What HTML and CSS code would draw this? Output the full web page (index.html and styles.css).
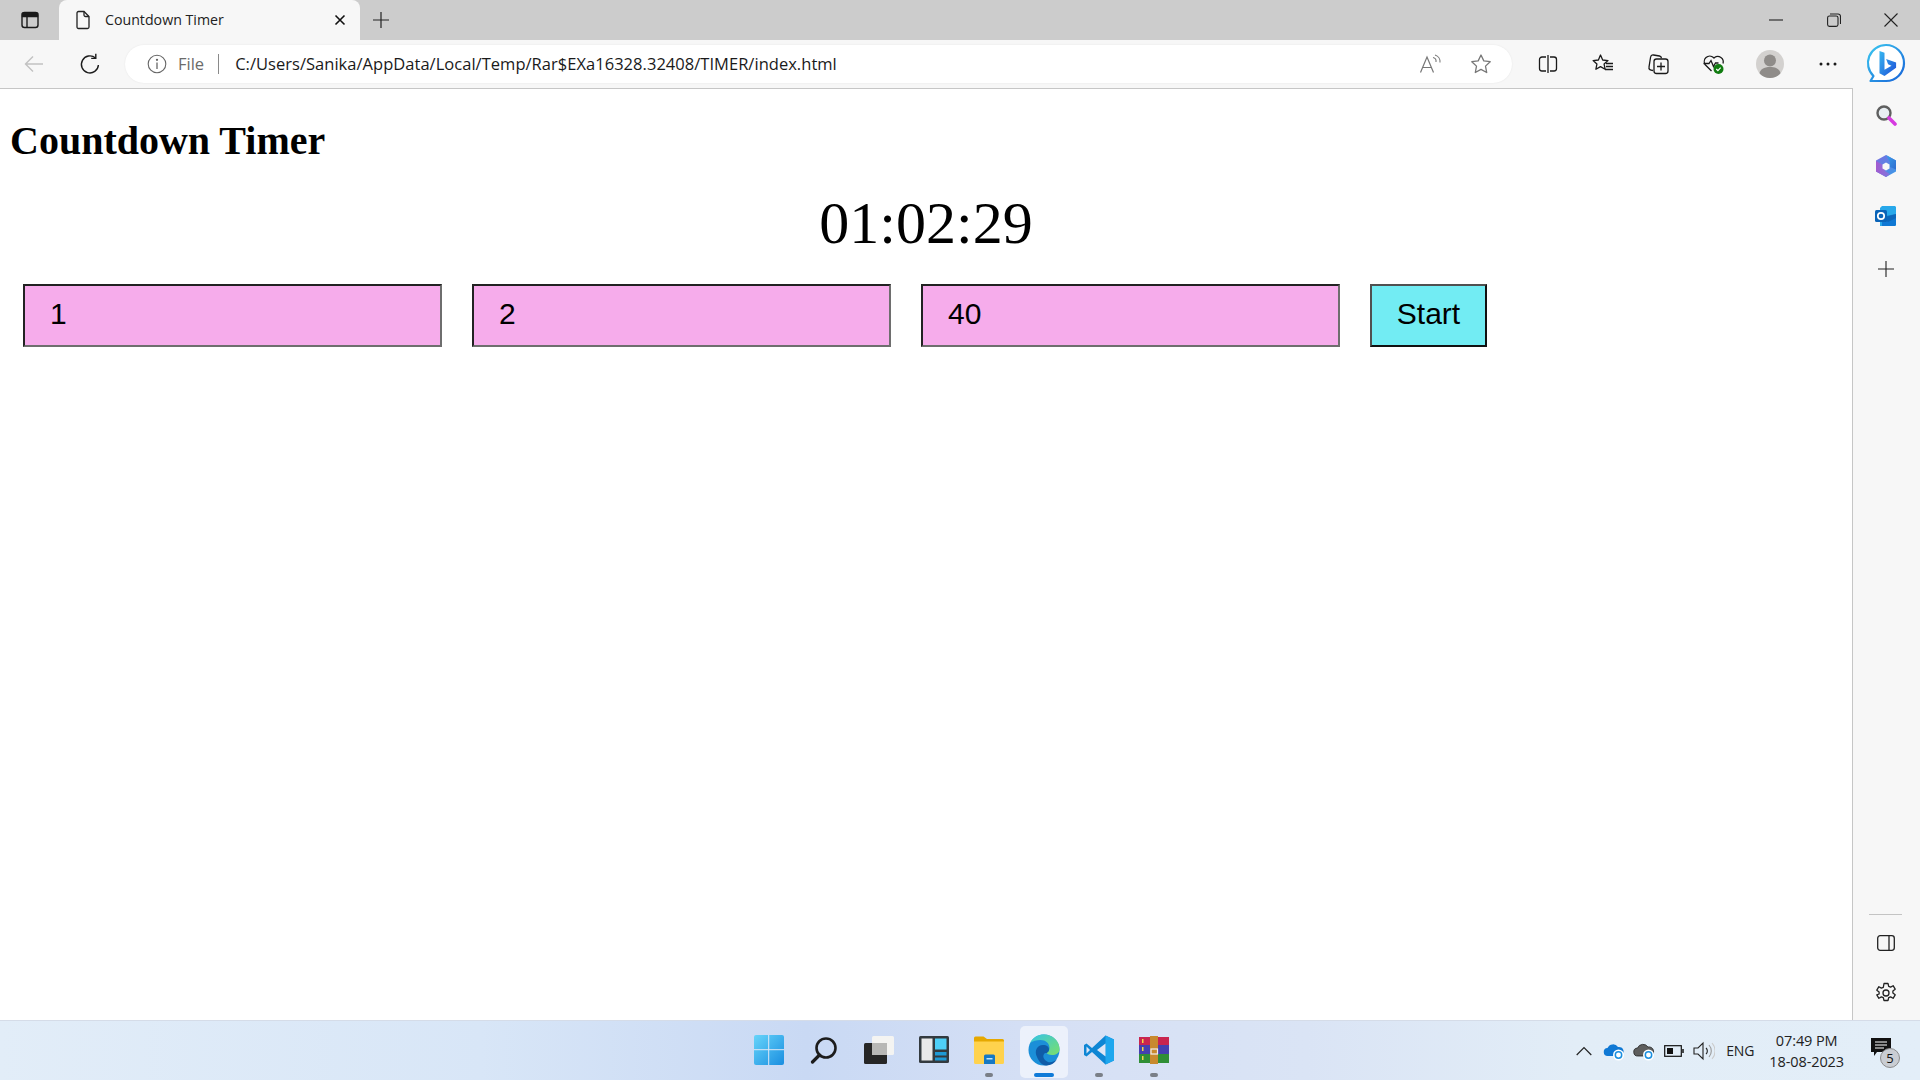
FILE: index.html
```html
<!DOCTYPE html>
<html lang="en">
<head>
<meta charset="utf-8">
<title>Countdown Timer</title>
<link rel="stylesheet" href="styles.css">
</head>
<body>
<div class="window">
  <header class="tabstrip">
    <div class="tabstrip-left">
      <span class="cell-tabs">
        <svg width="20" height="20" viewBox="0 0 20 20" fill="none" stroke="#1a1a1a" stroke-width="1.4"><rect x="2" y="2.5" width="16" height="15" rx="2.5"/><path d="M2.5 3.5h15v3h-15z" fill="#1a1a1a"/><path d="M7 6v11"/></svg>
      </span>
      <div class="tab">
        <svg width="18" height="20" viewBox="0 0 18 20" fill="none" stroke="#222" stroke-width="1.3"><path d="M3 3a1.5 1.5 0 0 1 1.5-1.5H10L15 6.5V17a1.5 1.5 0 0 1-1.5 1.5h-9A1.5 1.5 0 0 1 3 17z"/><path d="M10 1.5V5a1.5 1.5 0 0 0 1.5 1.5H15"/></svg>
        <span class="tab-title">Countdown Timer</span>
        <svg class="tab-close" width="12" height="12" viewBox="0 0 12 12" stroke="#111" stroke-width="1.6"><path d="M1.5 1.5l9 9M10.500 1.500l-9 9"/></svg>
      </div>
      <span class="cell-new">
        <svg width="18" height="18" viewBox="0 0 18 18" stroke="#222" stroke-width="1.2"><path d="M9 1v16M1 9h16"/></svg>
      </span>
    </div>
    <div class="winctl">
      <span class="winbtn"><svg width="14" height="14" viewBox="0 0 14 14" stroke="#222" stroke-width="1.1"><path d="M0 7h14"/></svg></span>
      <span class="winbtn"><svg width="14" height="14" viewBox="0 0 14 14" fill="none" stroke="#222" stroke-width="1.1"><rect x=".6" y="3" width="10.400" height="10.400" rx="1.800"/><path d="M3 1h8a2.500 2.500 0 0 1 2.500 2.500V11"/></svg></span>
      <span class="winbtn"><svg width="14" height="14" viewBox="0 0 14 14" stroke="#222" stroke-width="1.1"><path d="M.5.5l13 13M13.500.5l-13 13"/></svg></span>
    </div>
  </header>

  <nav class="toolbar">
    <span class="navbtn"><svg width="20" height="18" viewBox="0 0 20 18" fill="none" stroke="#c2c2c2" stroke-width="1.4"><path d="M19 9H1.500M9 1.500L1.500 9 9 16.500"/></svg></span>
    <span class="navbtn"><svg width="22" height="22" viewBox="0 0 22 22" fill="none" stroke="#1c1c1c" stroke-width="1.4"><path d="M16.500 5A8.500 8.500 0 1 0 19.400 12"/><path d="M16.800 .8V5.400H12.200"/></svg></span>
    <div class="address">
      <svg class="addr-info" width="20" height="20" viewBox="0 0 20 20" fill="none" stroke="#666" stroke-width="1.100"><circle cx="10" cy="10" r="8.800"/><path d="M10 8.500V15" stroke-width="1.300"/><circle cx="10" cy="5.800" r=".6" fill="#666"/></svg>
      <span class="addr-file">File</span>
      <span class="addr-sep"></span>
      <span class="addr-url">C:/Users/Sanika/AppData/Local/Temp/Rar$EXa16328.32408/TIMER/index.html</span>
      <span class="addr-actions">
        <svg width="24" height="20" viewBox="0 0 24 20" fill="none" stroke="#777" stroke-width="1.200"><path d="M1.500 18.500L8 3l6.500 15.500M3.800 13.500h8.400"/><path d="M14 3.500a4 4 0 0 1 3 4.500M16 1a7 7 0 0 1 5 7.500" stroke-width="1.100"/></svg>
        <svg width="22" height="22" viewBox="0 0 22 22" fill="none" stroke="#777" stroke-width="1.300" stroke-linejoin="round"><path d="M11 2l2.800 5.900 6.400.8-4.700 4.400 1.200 6.400L11 16.400l-5.700 3.100 1.200-6.400L1.800 8.700l6.400-.8z"/></svg>
      </span>
    </div>
    <div class="toolbar-right">
      <span class="tbtn"><svg width="20" height="20" viewBox="0 0 20 20" fill="none" stroke="#1a1a1a" stroke-width="1.300"><path d="M8 3H4a2.500 2.500 0 0 0-2.500 2.500v9A2.500 2.500 0 0 0 4 17h4M12 3h4a2.500 2.500 0 0 1 2.500 2.500v9A2.500 2.500 0 0 1 16 17h-4M10 1v18"/></svg></span>
      <span class="tbtn"><svg width="22" height="22" viewBox="0 0 22 22" fill="none" stroke="#1a1a1a" stroke-width="1.300" stroke-linejoin="round"><path d="M8.500 2l2.200 5 5.300.6-3.900 3.500 1 5.100-4.600-2.600-4.600 2.600 1-5.100L1.100 7.600 6.400 7z"/><path d="M14 10.500h7M14 13.500h7M13 16.500h8"/></svg></span>
      <span class="tbtn"><svg width="22" height="22" viewBox="0 0 22 22" fill="none" stroke="#1a1a1a" stroke-width="1.300"><path d="M6 17.500l-2-.4A2.500 2.500 0 0 1 2 14.200L3.600 4a2.500 2.500 0 0 1 2.900-2l6 1a2.500 2.500 0 0 1 2 2.200"/><rect x="7" y="6" width="14" height="14.500" rx="2.500"/><path d="M14 9.500v8M10 13.500h8"/></svg></span>
      <span class="tbtn"><svg width="24" height="24" viewBox="0 0 24 24" fill="none" stroke="#1a1a1a" stroke-width="1.300"><path d="M9.500 19L3.500 13A5.500 5.500 0 0 1 11.500 5.500l.5.5.5-.5A5.500 5.500 0 0 1 21 11.500"/><path d="M1.500 11.500H7l2-3 2.500 6 2-3.500h3"/><circle cx="16.500" cy="17" r="5" fill="#107c10" stroke="none"/><path d="M14.300 17l1.600 1.600 2.800-3" stroke="#fff" stroke-width="1.200"/></svg></span>
      <span class="tbtn tbtn-avatar"><span class="avatar"><svg width="28" height="28" viewBox="0 0 28 28" fill="#8f8c89"><circle cx="14" cy="10.500" r="6"/><path d="M3 25c1-6 5-8 11-8s10 2 11 8a14 14 0 0 1-22 0z"/></svg></span></span>
      <span class="tbtn tbtn-more"><svg width="18" height="4" viewBox="0 0 18 4" fill="#1a1a1a"><circle cx="2" cy="2" r="1.500"/><circle cx="9" cy="2" r="1.500"/><circle cx="16" cy="2" r="1.500"/></svg></span>
      <span class="tbtn-bing"><svg width="40" height="42" viewBox="0 0 40 42"><defs><linearGradient id="bingRing" x1="0" y1="0" x2="1" y2="1"><stop offset="0" stop-color="#3bc8f0"/><stop offset="1" stop-color="#1763d8"/></linearGradient><linearGradient id="bingB" x1="0" y1="0" x2="1" y2="1"><stop offset="0" stop-color="#36b7f0"/><stop offset="1" stop-color="#1d4fd8"/></linearGradient></defs><path d="M20 2a18 18 0 0 1 0 36H4.500l3-5A18 18 0 0 1 20 2z" fill="#fff" stroke="url(#bingRing)" stroke-width="2.200" stroke-linejoin="round"/><path d="M13.500 8l5 1.800v17l7-4-3.400-1.600-2-5.200 10 3.500v5.200L18.500 33l-5-2.800z" fill="url(#bingB)"/></svg></span>
    </div>
  </nav>

  <div class="body-row">
    <main class="page">
      <h1 class="title">Countdown Timer</h1>
      <div class="clock">01:02:29</div>
      <form class="controls">
        <input class="field" type="text" value="1">
        <input class="field" type="text" value="2">
        <input class="field" type="text" value="40">
        <button class="start" type="button">Start</button>
      </form>
    </main>
    <aside class="sidebar">
      <div class="side-top">
        <span class="sidebtn"><svg width="22" height="22" viewBox="0 0 22 22" fill="none"><circle cx="9" cy="9" r="6.500" fill="#e8eef2" stroke="#5f5f5f" stroke-width="2.400"/><path d="M14 14l6 6" stroke="#d63be0" stroke-width="3.600" stroke-linecap="round"/></svg></span>
        <span class="sidebtn"><svg width="22" height="24" viewBox="0 0 22 24"><defs><linearGradient id="m1" x1="0" y1="0" x2="1" y2="1"><stop offset="0" stop-color="#7a6de0"/><stop offset="1" stop-color="#3a9be8"/></linearGradient><linearGradient id="m2" x1="0" y1="0" x2="1" y2="1"><stop offset="0" stop-color="#3aa2ee"/><stop offset="1" stop-color="#2f6ccf"/></linearGradient><linearGradient id="m3" x1="0" y1="0" x2="1" y2="0"><stop offset="0" stop-color="#a35bcf"/><stop offset="1" stop-color="#7e78dd"/></linearGradient></defs><path d="M11 1L21 6.500v11L11 23 1 17.500v-11z" fill="url(#m1)"/><path d="M11 1l10 5.500v9L15 13V8z" fill="url(#m2)"/><path d="M1 7l9 5v5l5 3-4 3-10-5.500z" fill="url(#m3)"/><path d="M11 8.500l3.500 2v4L11 16.500l-3.500-2v-4z" fill="#f7f7f7"/></svg></span>
        <span class="sidebtn"><svg width="22" height="22" viewBox="0 0 22 22"><path d="M7 1h13l1 1v18l-1 1H5V3z" fill="#28a8ea"/><path d="M21 9v11l-1 1H7V13z" fill="#0f78d4"/><path d="M6 12l15-3v4l-8 4z" fill="#0a5aa8" opacity=".6"/><rect x="0" y="5" width="12" height="12" rx="1.500" fill="#0a64b8"/><circle cx="6" cy="11" r="3.200" fill="none" stroke="#fff" stroke-width="1.700"/></svg></span>
        <span class="sidebtn"><svg width="16" height="16" viewBox="0 0 16 16" stroke="#222" stroke-width="1.100"><path d="M8 0v16M0 8h16"/></svg></span>
      </div>
      <div class="side-bottom">
        <span class="side-divider"></span>
        <span class="sidebtn sidebtn-panel"><svg width="20" height="18" viewBox="0 0 20 18" fill="none" stroke="#222" stroke-width="1.300"><rect x="1.700" y="1.700" width="16.600" height="14.600" rx="2.500"/><path d="M13 1.700v14.600"/></svg></span>
        <span class="sidebtn"><svg width="22" height="22" viewBox="0 0 22 22" fill="none" stroke="#222" stroke-width="1.300" stroke-linejoin="round"><circle cx="11" cy="11" r="3"/><path d="M9 1.500h4l.7 2.800 1.900.8 2.500-1.400 2.100 3.500-2.300 1.800v2l2.300 1.800-2.100 3.500-2.500-1.400-1.900.8-.7 2.800H9l-.7-2.800-1.900-.8-2.500 1.400-2.100-3.500L4.100 12v-2L1.800 8.200l2.100-3.500 2.500 1.400 1.900-.8z"/></svg></span>
      </div>
    </aside>
  </div>

  <footer class="taskbar">
    <div class="task-spacer"></div>
    <div class="task-apps">
      <span class="app"><svg width="30" height="30" viewBox="0 0 30 30"><defs><linearGradient id="w1" x1="0" y1="0" x2="1" y2="1"><stop offset="0" stop-color="#66d4fa"/><stop offset="1" stop-color="#1a8ee0"/></linearGradient></defs><rect width="30" height="30" rx="2" fill="url(#w1)"/><path d="M14.700 0v30M0 14.700h30" stroke="#dfe8f6" stroke-width="1"/></svg></span>
      <span class="app"><svg width="28" height="28" viewBox="0 0 28 28" fill="none" stroke="#1c1c1c" stroke-width="2.600"><circle cx="16" cy="12" r="9.500"/><path d="M9.500 19L2.500 26" stroke-width="3.200" stroke-linecap="round"/></svg></span>
      <span class="app"><svg width="30" height="30" viewBox="0 0 30 30"><rect x="8" y="1" width="22" height="19" rx="1.500" fill="#f4f4f2"/><rect x="0" y="8" width="23" height="21" rx="1.500" fill="#262626"/><rect x="8" y="8" width="15" height="12" fill="#b8b8b6"/></svg></span>
      <span class="app"><svg width="30" height="27" viewBox="0 0 30 27"><rect width="30" height="27" rx="1.500" fill="#333a3f"/><rect x="2.500" y="2.500" width="11" height="22" fill="#e9e9e9"/><rect x="16" y="2.500" width="11.500" height="11" fill="#4fd0f7"/><rect x="16" y="16" width="11.500" height="3.500" fill="#1e9ad6"/><rect x="16" y="21.500" width="11.500" height="3" fill="#1e9ad6"/></svg></span>
      <span class="app"><svg width="30" height="28" viewBox="0 0 30 28"><path d="M0 2a1.500 1.500 0 0 1 1.500-1.500h8L13 3h15.500A1.500 1.500 0 0 1 30 4.500V8H0z" fill="#e6a800"/><path d="M0 5.500h30V26.500a1.500 1.500 0 0 1-1.500 1.500h-27A1.500 1.500 0 0 1 0 26.500z" fill="#ffd24d"/><path d="M10 20a1.500 1.500 0 0 1 1.500-1.500h8A1.500 1.500 0 0 1 21 20v8H10z" fill="#1578c4"/><rect x="12.500" y="22" width="6" height="1.500" fill="#bfe3f8"/></svg><i class="run-dot"></i></span>
      <span class="app app-active"><svg width="32" height="32" viewBox="0 0 32 32"><defs><linearGradient id="e1" x1="0" y1="0" x2="1" y2="1"><stop offset="0" stop-color="#33c4e8"/><stop offset="1" stop-color="#7be06a"/></linearGradient></defs><circle cx="16" cy="16" r="15.500" fill="#1b8fd8"/><path d="M2 9C5 3 10 .5 16 .5c9 0 15.500 7 15.500 14.500 0 4-3.500 6-7.500 6-3 0-5.500-1-5.500-2.500 2-1 3-2.500 3-4.500 0-5-4-8-9-8-4 0-8 1-10.500 3z" fill="url(#e1)"/><path d="M9 23c-3-6 0-12 6-12 4 0 6 2 6 4.500 0 3-3 4-4 3.500-3 2-2 7 3 9 3 .8 7-.5 9-3-3 6-9 6.500-11 6.500-4 0-7-4-9-8.500z" fill="#0f5ca8"/></svg><i class="run-bar"></i></span>
      <span class="app"><svg width="30" height="30" viewBox="0 0 30 30"><path d="M21.500.5L30 4.500v21l-8.500 4L8 17 2.500 21.500 0 20v-10l2.500-1.500L8 13z" fill="#0e86d4"/><path d="M21.500.5L30 4.500v21l-8.500 4z" fill="#1ea7ee"/><path d="M21.500 8.500v13L13 15z" fill="#dce6f6"/><path d="M2.500 11.500L6 15l-3.500 3.500z" fill="#dce6f6"/></svg><i class="run-dot"></i></span>
      <span class="app"><svg width="30" height="28" viewBox="0 0 30 28"><rect y="1" width="30" height="8" fill="#c9254f"/><rect y="9" width="30" height="9" fill="#4540b0"/><rect y="18" width="30" height="9" fill="#2f8f36"/><rect x="11" y="0" width="8" height="28" fill="#c88a2e"/><rect x="12" y="13" width="6.500" height="5" fill="none" stroke="#eee" stroke-width="1.200"/><rect x="3" y="11" width="1.500" height="4" fill="#f2d648"/><rect x="3" y="20" width="1.500" height="4" fill="#f2d648"/><rect x="3" y="3" width="1.500" height="4" fill="#f2d648"/></svg><i class="run-dot"></i></span>
    </div>
    <div class="tray">
      <span class="tray-ic"><svg width="16" height="10" viewBox="0 0 16 10" fill="none" stroke="#222" stroke-width="1.200"><path d="M.7 9L8 1.500 15.300 9"/></svg></span>
      <span class="tray-ic"><svg width="22" height="20" viewBox="0 0 22 20"><path d="M5 15a4 4 0 0 1-.5-8A6 6 0 0 1 15 6a4.500 4.500 0 0 1 2 9z" fill="#0f78d4"/><circle cx="15.500" cy="14" r="5.500" fill="#fff"/><circle cx="15.500" cy="14" r="3.200" fill="none" stroke="#1a8fe0" stroke-width="1.500"/></svg></span>
      <span class="tray-ic"><svg width="22" height="20" viewBox="0 0 22 20"><path d="M5 15a4 4 0 0 1-.5-8A6 6 0 0 1 15 6a4.500 4.500 0 0 1 2 9z" fill="#5e5e5e" stroke="#222" stroke-width=".8"/><circle cx="15.500" cy="14" r="5.500" fill="#fff"/><circle cx="15.500" cy="14" r="3.200" fill="none" stroke="#1a8fe0" stroke-width="1.500"/></svg></span>
      <span class="tray-ic"><svg width="20" height="12" viewBox="0 0 20 12" fill="none" stroke="#111" stroke-width="1.200"><rect x=".7" y=".7" width="16.600" height="10.600"/><rect x="3" y="3" width="6" height="6" fill="#111" stroke="none"/><path d="M19 4v4" stroke-width="1.500"/></svg></span>
      <span class="tray-ic"><svg width="22" height="20" viewBox="0 0 22 20" fill="none" stroke="#222" stroke-width="1.100"><path d="M1 7h4l5-5v16l-5-5H1z"/><path d="M13 7a4 4 0 0 1 0 6"/><path d="M16 4a9 9 0 0 1 0 12" stroke="#999"/><path d="M19 2a12 12 0 0 1 0 16" stroke="#ccc"/></svg></span>
      <span class="tray-lang">ENG</span>
      <span class="tray-clock"><span>07:49 PM</span><span>18-08-2023</span></span>
      <span class="tray-notif">
        <svg width="20" height="18" viewBox="0 0 20 18"><path d="M0 0h20v14H6l-3 4v-4H0z" fill="#111"/><path d="M4 4h12M4 7h12M4 10h9" stroke="#fff" stroke-width="1"/></svg>
        <span class="badge">5</span>
      </span>
    </div>
  </footer>
</div>
</body>
</html>
```
FILE: styles.css
```css
* { box-sizing: border-box; }
html, body { margin: 0; height: 100%; overflow: hidden; }
body { font-family: "Open Sans", "Noto Sans", sans-serif; background: #fff; color: #000; }

.window { display: flex; flex-direction: column; height: 1080px; width: 1920px; }

/* Tab strip */
.tabstrip { height: 40px; flex: none; background: #cccccc; display: flex; justify-content: space-between; }
.tabstrip-left { display: flex; align-items: stretch; }
.cell-tabs { width: 59px; display: flex; align-items: center; justify-content: center; }
.tab { width: 301px; background: #f7f7f7; border-radius: 8px 8px 0 0; display: flex; align-items: center; padding: 0 14px 0 15px; }
.tab-title { font-size: 14.200px; margin-left: 13px; padding-bottom: 2px; color: #222; flex: 1; }
.tab-close { flex: none; }
.cell-new { width: 41px; display: flex; align-items: center; justify-content: center; }
.winctl { display: flex; }
.winbtn { width: 57.500px; display: flex; align-items: center; justify-content: center; }

/* Toolbar */
.toolbar { height: 48px; flex: none; background: #f7f7f7; display: flex; align-items: center; padding-left: 12px; }
.navbtn { width: 44px; height: 38px; margin-right: 11px; display: flex; align-items: center; justify-content: center; }
.navbtn + .navbtn { margin-left: 1px; margin-right: 10px; }
.address { width: 1387px; margin-left: 3px; height: 38px; background: #fff; border-radius: 19px; display: flex; align-items: center; padding: 0 20px 0 22px; box-shadow: 0 0 2px rgba(0,0,0,.08); }
.addr-info { flex: none; }
.addr-file { font-size: 16.500px; color: #6b6b6b; margin-left: 11px; padding-bottom: 2px; }
.addr-sep { width: 1px; height: 20px; background: #8a8a8a; margin: 0 16px 0 14px; }
.addr-url { font-size: 16.500px; color: #1a1a1a; white-space: nowrap; flex: 1; padding-bottom: 2px; letter-spacing: .03px; }
.addr-actions { display: flex; align-items: center; gap: 27px; }
.toolbar-right { display: flex; align-items: center; margin-left: 8px; }
.tbtn { width: 55.300px; height: 38px; display: flex; align-items: center; justify-content: center; }
.tbtn-avatar { margin-left: 1px; }
.tbtn-more { padding-left: 5px; }
.tbtn-bing { width: 62px; margin-left: 2px; display: flex; justify-content: center; }
.avatar { width: 28px; height: 28px; border-radius: 50%; background: #d3d1cf; overflow: hidden; display: block; }

/* Body */
.body-row { flex: 1; display: flex; min-height: 0; }
.page { width: 1853px; flex: none; background: #fff; border-top: 1px solid #c6c6c6; border-right: 1px solid #c6c6c6; padding: 0 10px; font-family: "Liberation Serif", serif; }
.title { font-size: 40px; font-weight: bold; margin: 29px 0 0; line-height: 46px; }
.clock { font-size: 60px; text-align: center; line-height: 69px; margin-top: 25px; }
.controls { display: flex; gap: 30px; margin: 26px 0 0 13px; }
.field { width: 419px; height: 63px; font: 30px "Liberation Sans", Arial, sans-serif; padding: 0 25px 3px; background: #f6aceb; border: 2px solid; border-color: #222 #6e6e6e #6e6e6e #222; color: #000; outline: 0; border-radius: 0; }
.start { width: 117px; height: 63px; font: 30px "Liberation Sans", Arial, sans-serif; background: #72ecf3; border: 2px solid; border-color: #505050 #111 #111 #505050; color: #000; padding: 0 0 3px; border-radius: 0; }

/* Sidebar */
.sidebar { flex: 1; background: #f7f7f7; display: flex; flex-direction: column; justify-content: space-between; align-items: center; padding: 7px 2px 7px 0; }
.side-top, .side-bottom { display: flex; flex-direction: column; align-items: center; }
.sidebtn { width: 40px; height: 40px; display: flex; align-items: center; justify-content: center; }
.side-top .sidebtn { margin-bottom: 10.500px; }
.side-top .sidebtn:nth-child(3) { margin-bottom: 13px; }
.side-bottom .sidebtn { margin-top: 10px; }
.side-bottom .sidebtn-panel { margin-top: 8px; }
.side-divider { width: 33px; height: 1px; background: #c4c4c4; }

/* Taskbar */
.taskbar { height: 60px; flex: none; display: grid; grid-template-columns: 1fr auto 1fr; align-items: center; border-top: 1px solid #d5dce8; padding-left: 2px; background: linear-gradient(90deg, #e2edf8 0%, #d8e6f7 25%, #c9d9f4 42%, #d6e0f5 55%, #dae4f5 68%, #e2edf7 82%, #e3eef8 100%); }
.task-apps { display: flex; height: 100%; }
.app { width: 55px; position: relative; display: flex; align-items: center; justify-content: center; padding-bottom: 2px; }
.app-active::before { content: ""; position: absolute; left: 4px; right: 3px; top: 5px; bottom: 2px; background: rgba(255,255,255,.55); border-radius: 5px; z-index: 0; }
.app svg { position: relative; z-index: 1; }
.run-dot { position: absolute; bottom: 3px; left: 24px; width: 8px; height: 4px; border-radius: 2px; background: #7a7f87; z-index: 1; }
.run-bar { position: absolute; bottom: 3px; left: 18px; width: 20px; height: 4px; border-radius: 2px; background: #0f7ad8; z-index: 1; }
.tray { display: flex; align-items: center; justify-content: flex-end; padding-right: 23px; height: 100%; }
.tray-ic { width: 30px; display: flex; align-items: center; justify-content: center; }
.tray-lang { font-size: 14px; color: #222; margin-left: 7px; letter-spacing: -.1px; }
.tray-clock { display: flex; flex-direction: column; align-items: center; font-size: 14.500px; line-height: 21px; color: #222; margin-left: 15px; letter-spacing: -.1px; }
.tray-notif { position: relative; width: 26px; height: 26px; margin-left: 27px; }
.badge { position: absolute; left: 9px; top: 10px; width: 20px; height: 20px; border-radius: 50%; background: #c9cdd3; border: 1px solid #8c8c8c; font-size: 13px; line-height: 18px; text-align: center; color: #111; }
```
